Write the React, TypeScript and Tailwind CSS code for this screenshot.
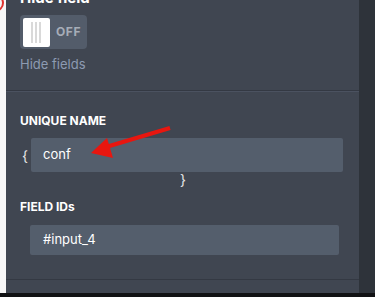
export default function App() {
  return (
    <div
      className="flex h-[297px] w-[375px] flex-col overflow-hidden bg-[#111214]"
      style={{ fontFamily: "Inter, 'Liberation Sans', sans-serif" }}
    >
      <div className="flex h-[293px]">
        {/* left page edge */}
        <div className="relative w-[6px] overflow-hidden bg-[#f7f7f7]">
          <div className="absolute -left-[14px] -top-[6px] h-[18px] w-[18px] rounded-full border-[2px] border-[#e0332f]" />
        </div>

        {/* panel */}
        <div className="relative flex flex-1 flex-col overflow-hidden bg-[#404651]">
          {/* hide field */}
          <div className="h-[90px] pl-[14px]">
            <div className="-mt-[10px] h-[16px] text-[15px] font-bold leading-[16px] text-white">
              Hide field
            </div>
            <div className="mt-[9px] flex h-[34px] w-[67px] items-center rounded-[4px] bg-[#535c6a] pl-[3px]">
              <div className="relative h-[29px] w-[27px] rounded-[2px] bg-white">
                <div className="absolute left-[8px] top-[4px] h-[21px] w-[2px] bg-[#d9d9d9]" />
                <div className="absolute left-[12px] top-[4px] h-[21px] w-[2px] bg-[#d9d9d9]" />
                <div className="absolute left-[16px] top-[4px] h-[21px] w-[2px] bg-[#d9d9d9]" />
              </div>
              <span className="ml-[6px] text-[12px] font-bold tracking-[0.6px] text-[#a7adb8]">
                OFF
              </span>
            </div>
            <div className="mt-[7px] text-[13px] leading-[16px] text-[#8d9bb2]">
              Hide fields
            </div>
          </div>

          <div className="h-[1px] bg-[#343943]" />
          <div className="h-[1px] bg-[#4b5260]" />

          {/* unique name */}
          <div className="h-[187px] pl-[14px] pt-[22px]">
            <div className="text-[12px] font-bold leading-[14px] text-white">
              UNIQUE NAME
            </div>
            <div className="mt-[10px] flex items-center">
              <span className="w-[11px] pl-[2px] text-[14px] text-[#e8e8e8]">{"{"}</span>
              <div className="flex h-[34px] w-[312px] items-center rounded-[2px] bg-[#545e6c] pl-[12px] text-[13px] text-white">
                conf
              </div>
            </div>
            <div className="ml-[160px] text-[14px] leading-[16px] text-[#e8e8e8]">{"}"}</div>

            <div className="mt-[12px] text-[12px] font-bold leading-[14px] text-white">
              FIELD IDs
            </div>
            <div className="ml-[10px] mt-[11px] flex h-[30px] w-[309px] items-center rounded-[2px] bg-[#545e6c] pl-[13px] text-[13px] text-white">
              #input_4
            </div>
          </div>

          <div className="h-[1px] bg-[#343943]" />

          {/* red arrow */}
          <svg
            className="pointer-events-none absolute left-0 top-0"
            width="353"
            height="293"
            viewBox="6 0 353 293"
          >
            <line x1="106" y1="147" x2="170" y2="128" stroke="#e8160f" strokeWidth="4" />
            <polygon points="91,153 107,138 113,158" fill="#e8160f" />
          </svg>
        </div>

        {/* right dark strip */}
        <div className="w-[16px] bg-[#2e333a]" />
      </div>
    </div>
  );
}
